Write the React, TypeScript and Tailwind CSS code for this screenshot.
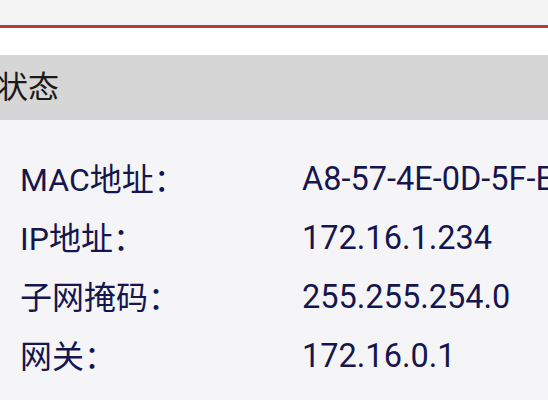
import React from 'react';

const rows = [
  { label: 'MAC地址：', value: 'A8-57-4E-0D-5F-E8' },
  { label: 'IP地址：', value: '172.16.1.234' },
  { label: '子网掩码：', value: '255.255.254.0' },
  { label: '网关：', value: '172.16.0.1' },
];

const App = () => {
  return (
    <div
      className="w-[548px] h-[400px] overflow-hidden bg-[#f5f5f7]"
      style={{ fontFamily: 'Roboto, "Noto Sans CJK SC", sans-serif' }}
    >
      <div className="h-[28px] bg-[#f4f4f4] border-b-[3px] border-[#b83a36]" />
      <div className="h-[27px] bg-white" />
      <div className="h-[65px] bg-[#d6d6d6] flex items-center">
        <span className="-ml-[3px] text-[31px] leading-none text-[#1a1a1a] whitespace-nowrap">状态</span>
      </div>
      <div className="pt-[30px] pl-[20px]">
        {rows.map((row) => (
          <div key={row.label} className="h-[59px] flex items-center text-[#16164f] whitespace-nowrap">
            <span className="w-[282px] shrink-0 text-[32px]">{row.label}</span>
            <span className="text-[32.5px]">{row.value}</span>
          </div>
        ))}
      </div>
    </div>
  );
};

export default App;
